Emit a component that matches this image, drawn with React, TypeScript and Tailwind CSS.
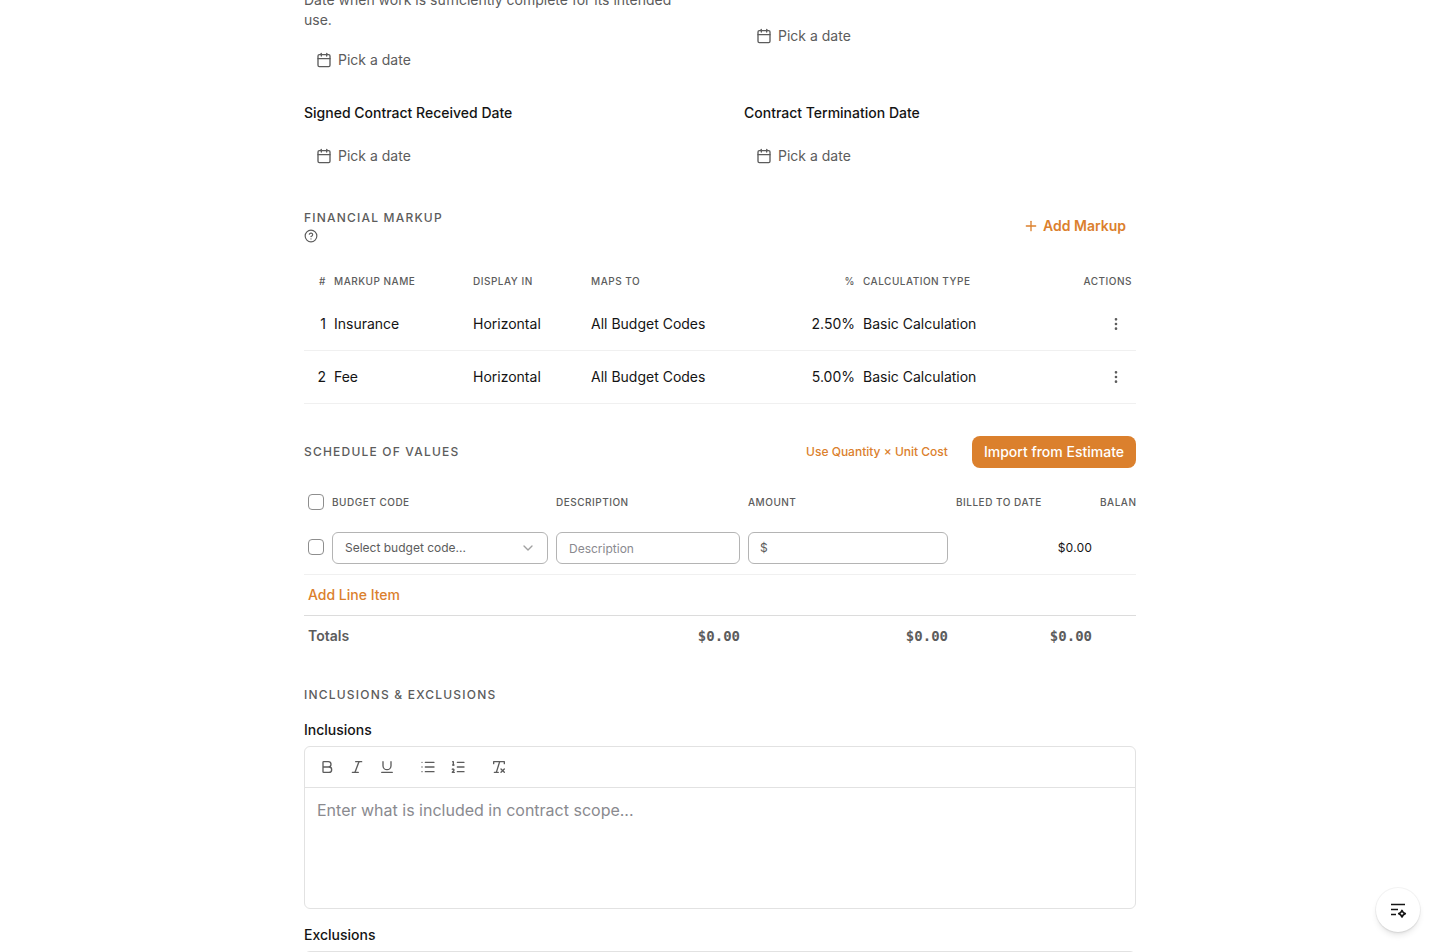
import React, { useState } from "react";
import {
  Bold,
  Calendar,
  ChevronDown,
  CircleHelp,
  EllipsisVertical,
  Italic,
  List,
  ListOrdered,
  Plus,
  RemoveFormatting,
  Underline,
} from "lucide-react";

interface Markup {
  id: number;
  name: string;
  displayIn: string;
  mapsTo: string;
  percent: string;
  calculation: string;
}

const markups: Markup[] = [
  {
    id: 1,
    name: "Insurance",
    displayIn: "Horizontal",
    mapsTo: "All Budget Codes",
    percent: "2.50%",
    calculation: "Basic Calculation",
  },
  {
    id: 2,
    name: "Fee",
    displayIn: "Horizontal",
    mapsTo: "All Budget Codes",
    percent: "5.00%",
    calculation: "Basic Calculation",
  },
];

const DateButton = ({ label }: { label: string }) => (
  <button
    type="button"
    aria-label={label}
    className="flex h-9 items-center gap-1.5 self-start px-3 text-sm text-[#5c5c5c]"
  >
    <Calendar className="size-4" />
    Pick a date
  </button>
);

const SectionTitle = ({ children }: { children: React.ReactNode }) => (
  <h2 className="text-xs leading-[18px] font-medium tracking-widest text-[#5c5c5c] uppercase">
    {children}
  </h2>
);

const th =
  "px-1 text-left text-[10px] font-medium tracking-wider whitespace-nowrap text-[#5c5c5c] uppercase";

const td = "border-b border-[#f0f0f0] px-1";

const total = "px-1 text-right font-['DejaVu_Sans_Mono',monospace]";

const toolGroups = [
  [
    { label: "Bold", Icon: Bold },
    { label: "Italic", Icon: Italic },
    { label: "Underline", Icon: Underline },
  ],
  [
    { label: "Bullet list", Icon: List },
    { label: "Numbered list", Icon: ListOrdered },
  ],
  [{ label: "Clear formatting", Icon: RemoveFormatting }],
];

const RichText = ({
  id,
  label,
  placeholder,
}: {
  id: string;
  label: string;
  placeholder: string;
}) => (
  <div className="flex flex-col gap-1.5">
    <label htmlFor={id} className="text-sm font-medium text-[#141414]">
      {label}
    </label>
    <div className="rounded-md border border-[#e2e2e2]">
      <div className="flex h-[41px] items-center gap-[13px] border-b border-[#e2e2e2] px-2">
        {toolGroups.map((group, i) => (
          <div key={i} className="flex gap-0.5">
            {group.map(({ label, Icon }) => (
              <button
                key={label}
                type="button"
                aria-label={label}
                className="flex size-7 items-center justify-center text-[#5c5c5c]"
              >
                <Icon className="size-4" />
              </button>
            ))}
          </div>
        ))}
      </div>
      <textarea
        id={id}
        placeholder={placeholder}
        className="block h-[120px] w-full resize-none px-3 py-2.5 text-base outline-none placeholder:text-[#8a8a8f]"
      />
    </div>
  </div>
);

const FinancialMarkup = () => (
  <section className="mt-[34px]">
    <div className="flex items-center justify-between">
      <div className="flex flex-col gap-0.5">
        <SectionTitle>Financial Markup</SectionTitle>
        <CircleHelp className="size-3.5 text-[#5c5c5c]" />
      </div>
      <button
        type="button"
        className="flex h-9 items-center gap-1 px-2.5 text-sm font-semibold text-[#db802d]"
      >
        <Plus className="size-4" />
        Add Markup
      </button>
    </div>

    <table className="mt-5 w-full table-fixed border-separate border-spacing-0 text-sm text-[#141414]">
      <thead>
        <tr className="h-[34px]">
          <th className={`${th} w-[26px]`}>
            <span className="block text-right">#</span>
          </th>
          <th className={`${th} w-[139px]`}>Markup Name</th>
          <th className={`${th} w-[118px]`}>Display In</th>
          <th className={`${th} w-[183px]`}>Maps To</th>
          <th className={`${th} w-[89px]`}>
            <span className="block text-right">%</span>
          </th>
          <th className={th}>Calculation Type</th>
          <th className={`${th} w-[80px]`}>
            <span className="block text-right">Actions</span>
          </th>
        </tr>
      </thead>
      <tbody>
        {markups.map((markup) => (
          <tr key={markup.id} className="h-[53px]">
            <td className={`${td} text-right`}>{markup.id}</td>
            <td className={td}>{markup.name}</td>
            <td className={td}>{markup.displayIn}</td>
            <td className={td}>{markup.mapsTo}</td>
            <td className={`${td} text-right`}>{markup.percent}</td>
            <td className={td}>{markup.calculation}</td>
            <td className={td}>
              <button
                type="button"
                aria-label={`Actions for ${markup.name}`}
                className="ml-auto flex size-8 items-center justify-center text-[#5c5c5c]"
              >
                <EllipsisVertical className="size-4" />
              </button>
            </td>
          </tr>
        ))}
      </tbody>
    </table>
  </section>
);

const Checkbox = ({ label }: { label: string }) => (
  <input
    type="checkbox"
    aria-label={label}
    className="mb-0.5 block size-4 appearance-none rounded-sm border border-[#8e8e8e] bg-white checked:bg-[#db802d]"
  />
);

const ScheduleOfValues = () => {
  const [amount, setAmount] = useState("");

  return (
    <section className="mt-8">
      <div className="flex items-center justify-between">
        <SectionTitle>Schedule of Values</SectionTitle>
        <div className="flex items-center gap-3">
          <button
            type="button"
            className="h-8 px-3 text-xs font-medium text-[#db802d]"
          >
            Use Quantity × Unit Cost
          </button>
          <button
            type="button"
            className="h-8 rounded-lg bg-[#db802d] px-3 text-sm font-medium text-white"
          >
            Import from Estimate
          </button>
        </div>
      </div>

      <div className="mt-4 overflow-x-auto [scrollbar-width:none]">
        <table className="w-[936px] table-fixed border-separate border-spacing-0 text-xs text-[#141414]">
          <thead>
            <tr className="h-[38px]">
              <th className="w-6 px-1">
                <Checkbox label="Select all line items" />
              </th>
              <th className={`${th} w-[224px]`}>Budget Code</th>
              <th className={`${th} w-[192px]`}>Description</th>
              <th className={`${th} w-[208px]`}>Amount</th>
              <th className={`${th} w-[144px]`}>Billed to Date</th>
              <th className={th}>Balance</th>
            </tr>
          </thead>
          <tbody>
            <tr className="h-[53px]">
              <td className={td}>
                <Checkbox label="Select line item" />
              </td>
              <td className={td}>
                <div className="relative">
                  <select
                    aria-label="Budget code"
                    className="block h-8 w-full appearance-none rounded-md border border-[#b4b4b4] bg-white px-3 text-[#5c5c5c]"
                  >
                    <option>Select budget code...</option>
                  </select>
                  <ChevronDown className="pointer-events-none absolute top-2 right-3 size-4 text-[#a0a0a0]" />
                </div>
              </td>
              <td className={td}>
                <input
                  type="text"
                  aria-label="Description"
                  placeholder="Description"
                  className="block h-8 w-full rounded-md border border-[#b4b4b4] px-3 placeholder:text-[#8a8a8f]"
                />
              </td>
              <td className={td}>
                <label className="flex h-8 items-center gap-1 rounded-md border border-[#b4b4b4] px-[11px] text-[#5c5c5c]">
                  $
                  <input
                    type="text"
                    aria-label="Amount"
                    value={amount}
                    onChange={(e) => setAmount(e.target.value)}
                    className="min-w-0 flex-1 outline-none"
                  />
                </label>
              </td>
              <td className={`${td} text-right tabular-nums`}>$0.00</td>
              <td className={td} />
            </tr>
            <tr className="h-[41px]">
              <td colSpan={6} className="border-b border-[#dcdcdc] px-1">
                <button
                  type="button"
                  className="block text-sm font-medium text-[#db802d]"
                >
                  Add Line Item
                </button>
              </td>
            </tr>
          </tbody>
          <tfoot>
            <tr className="h-10 text-sm font-semibold text-[#5c5c5c]">
              <td colSpan={2} className="px-1">
                Totals
              </td>
              <td className={total}>$0.00</td>
              <td className={total}>$0.00</td>
              <td className={total}>$0.00</td>
              <td />
            </tr>
          </tfoot>
        </table>
      </div>
    </section>
  );
};

export default function App() {
  return (
    <div className="h-screen overflow-hidden bg-white font-['Inter',sans-serif]">
      <main className="mx-auto -mt-2.5 max-w-4xl px-8">
        <div className="grid grid-cols-2 gap-x-12 gap-y-6">
          <div className="flex flex-col gap-3">
            <p className="text-sm text-[#5c5c5c]">
              Date when work is sufficiently complete for its intended use.
            </p>
            <DateButton label="Substantial completion date" />
          </div>
          <div className="flex flex-col pt-7">
            <DateButton label="Actual completion date" />
          </div>
          <div className="flex flex-col gap-3.5">
            <h3 className="text-sm leading-[22px] font-medium text-[#141414]">
              Signed Contract Received Date
            </h3>
            <DateButton label="Signed contract received date" />
          </div>
          <div className="flex flex-col gap-3.5">
            <h3 className="text-sm leading-[22px] font-medium text-[#141414]">
              Contract Termination Date
            </h3>
            <DateButton label="Contract termination date" />
          </div>
        </div>

        <FinancialMarkup />
        <ScheduleOfValues />

        <section className="mt-[30px] flex flex-col gap-4">
          <SectionTitle>Inclusions &amp; Exclusions</SectionTitle>
          <RichText
            id="inclusions"
            label="Inclusions"
            placeholder="Enter what is included in contract scope..."
          />
          <RichText
            id="exclusions"
            label="Exclusions"
            placeholder="Enter what is excluded from contract scope..."
          />
        </section>
      </main>

      <button
        type="button"
        aria-label="Open assistant"
        className="fixed right-5 bottom-5 flex size-11 items-center justify-center rounded-full bg-white text-[#141414] shadow-md ring-1 ring-black/5"
      >
        <svg
          viewBox="0 0 20 20"
          className="size-5"
          fill="none"
          stroke="currentColor"
          strokeWidth="1.5"
        >
          <path d="M3 4.500h14M3 9.500h7M3 14.500h5" />
          <path
            d="M14 10.500c.8 1.900 1.300 2.400 3.200 3.200-1.900.8-2.400 1.300-3.200 3.200-.8-1.900-1.300-2.400-3.200-3.200 1.900-.8 2.400-1.300 3.200-3.200z"
            strokeWidth="1.8"
            strokeLinejoin="round"
          />
        </svg>
      </button>
    </div>
  );
}
